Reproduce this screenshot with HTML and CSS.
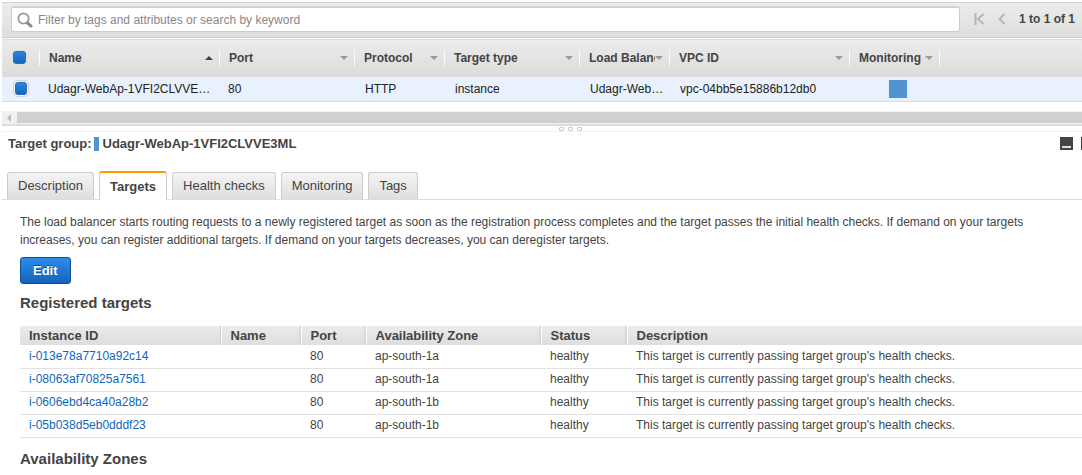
FILE: index.html
```html
<!DOCTYPE html>
<html lang="en">
<head>
<meta charset="utf-8">
<title>Target groups</title>
<link rel="stylesheet" href="styles.css">
</head>
<body>
<main class="console">
  <div class="toolbar">
    <label class="search">
      <svg class="search-icon" viewBox="0 0 16 16" aria-hidden="true"><circle cx="6.5" cy="6.5" r="5.2" fill="none" stroke="#999" stroke-width="1.8"/><path d="M10.500 11L14 14" stroke="#8c8c8c" stroke-width="3" stroke-linecap="round"/></svg>
      <input class="search-input" type="text" aria-label="Filter" placeholder="Filter by tags and attributes or search by keyword">
    </label>
    <nav class="pager" aria-label="Pages">
      <button class="pager-button" type="button" aria-label="First page"><svg width="11" height="12" viewBox="0 0 11 12"><path d="M1.500 0V12M9.500 1L4 6L9.500 11" fill="none" stroke="#b5b5b5" stroke-width="2"/></svg></button>
      <button class="pager-button" type="button" aria-label="Previous page"><svg width="8" height="12" viewBox="0 0 8 12"><path d="M6.500 1L1.500 6L6.500 11" fill="none" stroke="#b5b5b5" stroke-width="2"/></svg></button>
      <span class="pager-text">1 to 1 of 1</span>
    </nav>
  </div>

  <table class="grid">
    <colgroup><col class="g-check"><col class="g-name"><col class="g-port"><col class="g-protocol"><col class="g-type"><col class="g-lb"><col class="g-vpc"><col class="g-mon"><col></colgroup>
    <thead>
      <tr>
        <th><input class="tick" type="checkbox" aria-label="Select all"></th>
        <th><div class="col-head">Name<i class="sort sort-up"></i></div></th>
        <th><div class="col-head">Port<i class="sort"></i></div></th>
        <th><div class="col-head">Protocol<i class="sort"></i></div></th>
        <th><div class="col-head">Target type<i class="sort"></i></div></th>
        <th><div class="col-head"><span class="clip">Load Balancer</span><i class="sort"></i></div></th>
        <th><div class="col-head">VPC ID<i class="sort"></i></div></th>
        <th><div class="col-head">Monitoring<i class="sort"></i></div></th>
        <th><div class="col-head"></div></th>
      </tr>
    </thead>
    <tbody>
      <tr>
        <td><input class="tick tick-row" type="checkbox" aria-label="Select target group"></td>
        <td>Udagr-WebAp-1VFI2CLVVE3ML</td>
        <td>80</td>
        <td>HTTP</td>
        <td>instance</td>
        <td>Udagr-WebAp-1</td>
        <td>vpc-04bb5e15886b12db0</td>
        <td><span class="monitor"></span></td>
        <td></td>
      </tr>
    </tbody>
  </table>

  <div class="scrollbar"><i class="scroll-arrow"></i><div class="scroll-thumb"></div></div>
  <div class="splitter"><i class="dot"></i><i class="dot"></i><i class="dot"></i></div>

  <section class="detail">
    <header class="title-bar">
      <span>Target group:</span><i class="marker"></i><span>Udagr-WebAp-1VFI2CLVVE3ML</span>
      <div class="window-buttons">
        <button class="window-button" type="button" aria-label="Minimize"></button>
        <button class="window-button" type="button" aria-label="Restore"></button>
      </div>
    </header>

    <div class="tabs" role="tablist">
      <button class="tab" role="tab" type="button">Description</button>
      <button class="tab tab-active" role="tab" type="button" aria-selected="true">Targets</button>
      <button class="tab" role="tab" type="button">Health checks</button>
      <button class="tab" role="tab" type="button">Monitoring</button>
      <button class="tab" role="tab" type="button">Tags</button>
    </div>

    <div class="panel">
      <p class="intro">The load balancer starts routing requests to a newly registered target as soon as the registration process completes and the target passes the initial health checks. If demand on your targets<br>increases, you can register additional targets. If demand on your targets decreases, you can deregister targets.</p>
      <button class="edit" type="button">Edit</button>
      <h2 class="heading">Registered targets</h2>
      <table class="targets">
        <colgroup><col class="t-id"><col class="t-name"><col class="t-port"><col class="t-zone"><col class="t-status"><col></colgroup>
        <thead>
          <tr><th>Instance ID</th><th>Name</th><th>Port</th><th>Availability Zone</th><th>Status</th><th>Description</th></tr>
        </thead>
        <tbody>
          <tr><td><a href="#">i-013e78a7710a92c14</a></td><td></td><td>80</td><td>ap-south-1a</td><td>healthy</td><td>This target is currently passing target group's health checks.</td></tr>
          <tr><td><a href="#">i-08063af70825a7561</a></td><td></td><td>80</td><td>ap-south-1a</td><td>healthy</td><td>This target is currently passing target group's health checks.</td></tr>
          <tr><td><a href="#">i-0606ebd4ca40a28b2</a></td><td></td><td>80</td><td>ap-south-1b</td><td>healthy</td><td>This target is currently passing target group's health checks.</td></tr>
          <tr><td><a href="#">i-05b038d5eb0dddf23</a></td><td></td><td>80</td><td>ap-south-1b</td><td>healthy</td><td>This target is currently passing target group's health checks.</td></tr>
        </tbody>
      </table>
      <h2 class="heading">Availability Zones</h2>
    </div>
  </section>
</main>
</body>
</html>
```
FILE: styles.css
```css
* { box-sizing: border-box; }
body {
  margin: 0;
  background: #fff;
  color: #444;
  font: 12px/18px "Liberation Sans", Arial, sans-serif;
  overflow: hidden;
}
button, input { font: inherit; color: inherit; }
.console { padding: 2px 0 0 2px; }

.toolbar {
  display: flex;
  align-items: center;
  gap: 14px;
  padding: 3px 7px 5px 9px;
  border-top: 1px solid #d2d2d2;
  border-bottom: 1px solid #cfcfcf;
  background: linear-gradient(#ececec, #dedede);
}
.search {
  flex: 1;
  display: flex;
  align-items: center;
  height: 26px;
  padding-left: 5px;
  border: 1px solid #ccc;
  border-top: 2px solid #d2d2d2;
  border-radius: 3px;
  background: #fff;
}
.search-icon { width: 16px; height: 16px; }
.search-input {
  flex: 1;
  height: 20px;
  padding: 0 5px;
  border: 0;
  outline: 0;
  background: none;
}
.search-input::placeholder { color: #888; opacity: 1; }
.pager { display: flex; align-items: center; gap: 13px; }
.pager-button { display: flex; padding: 0; border: 0; background: none; }
.pager-text { font-weight: bold; }

.grid, .targets { width: 100%; table-layout: fixed; border-collapse: collapse; }
.grid th, .grid td, .targets th, .targets td {
  padding: 0;
  text-align: left;
  white-space: nowrap;
  overflow: hidden;
}
.grid thead {
  background: linear-gradient(#ebebeb, #dcdcdc);
  border-top: 1px solid #f8f8f8;
}
.grid th { height: 38px; }
.grid td {
  height: 25px;
  padding: 0 4px 0 9px;
  color: #222;
  background: #e8f1fd;
  border-bottom: 1px solid #d8dde4;
  text-overflow: ellipsis;
}
.grid td:nth-child(n+4) { padding-left: 11px; }
.grid td:first-child, .grid th:first-child { padding: 0 0 0 11px; }
.g-check { width: 37px; }
.g-name { width: 180px; }
.g-port { width: 135px; }
.g-protocol { width: 90px; }
.g-type { width: 135px; }
.g-lb { width: 90px; }
.g-vpc { width: 180px; }
.g-mon { width: 90px; }
.col-head {
  display: flex;
  align-items: center;
  justify-content: space-between;
  height: 16px;
  padding: 0 6px 0 9px;
  border-left: 1px solid #fafafa;
}
.clip { overflow: hidden; }
.sort {
  flex: none;
  border: 4px solid transparent;
  border-top-color: #999;
  border-bottom-width: 0;
}
.sort-up { border-top-width: 0; border-bottom: 4px solid #444; }
.tick {
  appearance: none;
  display: block;
  width: 13px;
  height: 13px;
  margin: 0;
  border: 1px solid #2871bd;
  border-radius: 3px;
  background: linear-gradient(#2c86dd, #1166bc);
  box-shadow: 0 0 0 1px #e0dfde;
}
.tick-row { width: 12px; margin-left: 2px; box-shadow: 0 0 0 1px #f2f2f2, 0 0 0 2px #cfd3d9; }
.monitor {
  display: block;
  width: 18px;
  height: 18px;
  margin: auto;
  background: #5394d0;
}

.scrollbar {
  display: flex;
  align-items: center;
  height: 13px;
  margin-top: 9px;
  background: #f1f1f1;
}
.scroll-arrow { margin: 0 6px 0 5px; border: 4px solid transparent; border-left-width: 0; border-right-color: #bbb; }
.scroll-thumb { flex: 1; height: 11px; background: #d0d0d0; }
.splitter {
  display: flex;
  justify-content: center;
  align-items: flex-end;
  gap: 4px;
  height: 8px;
  padding-right: 28px;
  padding-left: 84px;
  border-top: 2px solid #ddd;
  border-bottom: 1px solid #f2f2f2;
}
.dot { width: 5px; height: 4px; border: 1px solid #ccc; border-radius: 1px; }

.title-bar {
  display: flex;
  align-items: center;
  height: 23px;
  padding-left: 6px;
  font-size: 13px;
  font-weight: bold;
}
.marker { width: 5px; height: 14px; margin: 0 4px 0 2px; background: #5394d0; }
.window-buttons { display: flex; gap: 8px; margin: 0 -12px 0 auto; }
.window-button {
  width: 13px;
  height: 13px;
  padding: 0;
  border: 2px solid #444;
  border-top-width: 9px;
  background: #ddd;
}

.tabs {
  display: flex;
  align-items: flex-end;
  gap: 5px;
  height: 45px;
  padding-left: 5px;
  border-bottom: 1px solid #ddd;
  font-size: 13px;
}
.tab {
  height: 27px;
  padding: 0 10px;
  border: 1px solid #ccc;
  border-bottom: 0;
  border-radius: 3px 3px 0 0;
  background: linear-gradient(#f4f4f4, #dedede);
}
.tab-active {
  height: 29px;
  margin-bottom: -1px;
  border-top: 2px solid #f90;
  background: #fff;
  font-weight: bold;
}

.panel { padding: 13px 0 0 18px; }
.intro { margin: 0; white-space: nowrap; }
.edit {
  height: 27px;
  margin-top: 8px;
  padding: 0 12px;
  border: 1px solid #104e91;
  border-radius: 3px;
  background: linear-gradient(#2d8ceb, #1464b9);
  color: #fff;
  font-size: 13px;
  font-weight: bold;
  text-shadow: 0 -1px 0 #0c4a8a;
}
.heading { margin: 10px 0 14px; font-size: 15px; line-height: 18px; }
.targets th {
  height: 19px;
  padding-left: 9px;
  border-right: 1px solid #fff;
  background: linear-gradient(to left, #ccc 1px, transparent 1px), linear-gradient(#ebebeb, #dedede);
  font-size: 13px;
}
.targets th:last-child { border-right: 0; background: linear-gradient(#ebebeb, #dedede); }
.targets td { height: 23px; padding: 0 0 1px 9px; border-bottom: 1px solid #e2e2e2; }
.targets { margin-bottom: 12px; }
.targets a { color: #1166bb; text-decoration: none; }
.t-id { width: 201px; }
.t-name { width: 80px; }
.t-port { width: 65px; }
.t-zone { width: 175px; }
.t-status { width: 86px; }
```
